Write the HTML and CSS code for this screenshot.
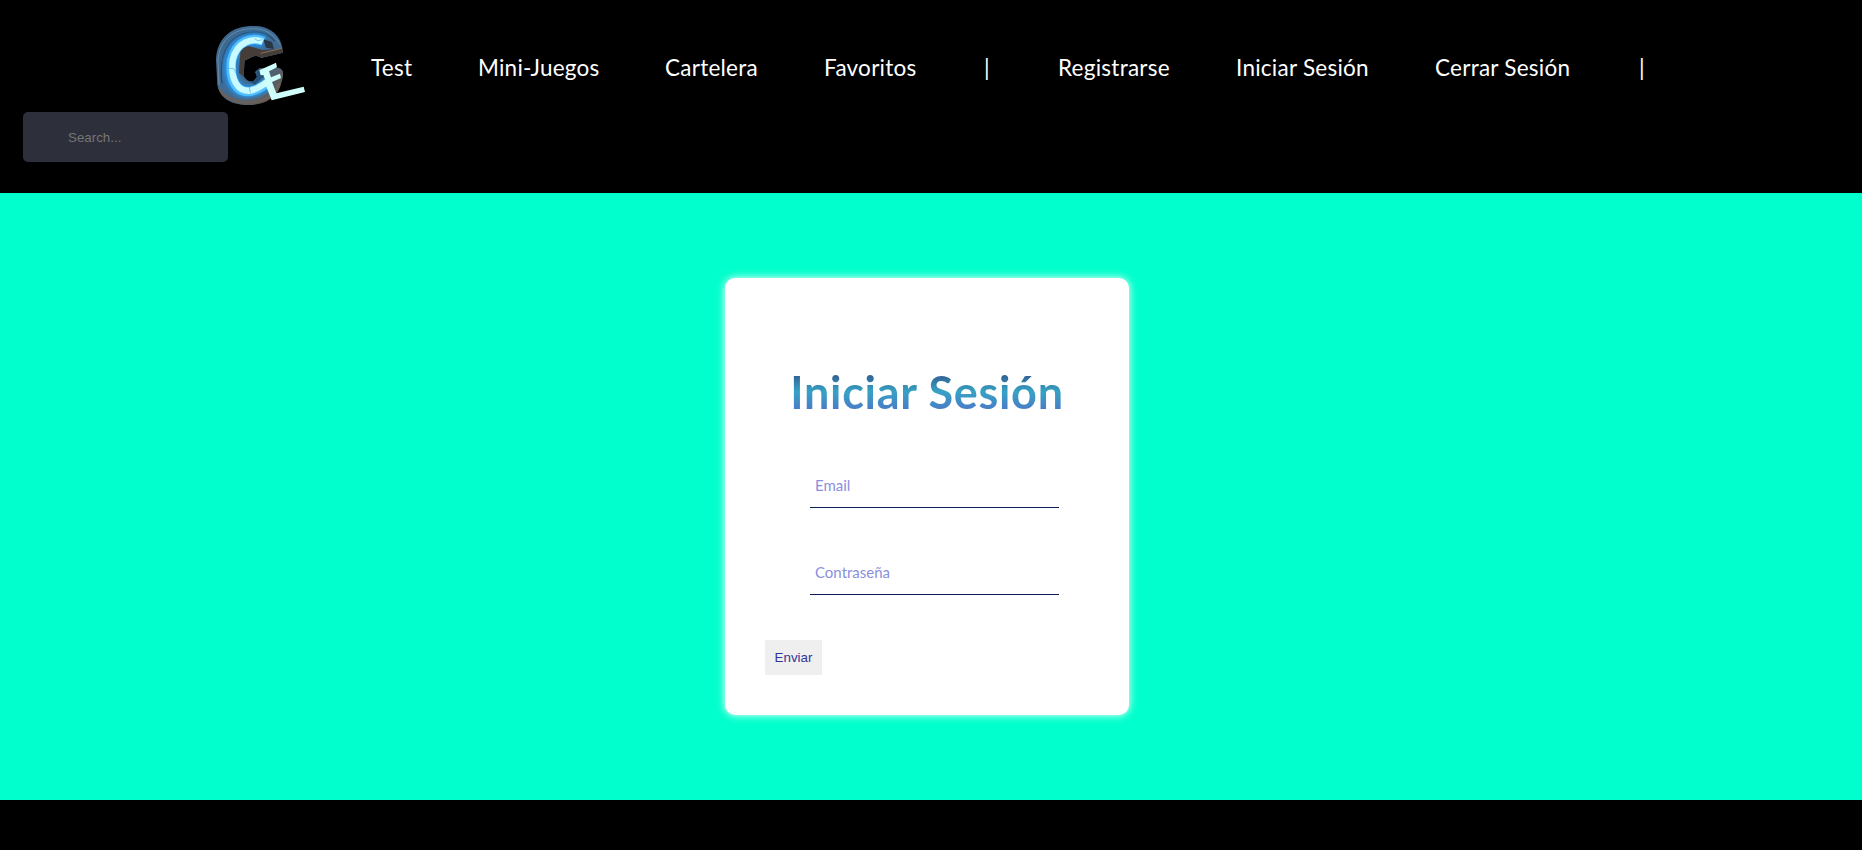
FILE: index.html
```html
<!DOCTYPE html>
<html lang="es">
<head>
<meta charset="utf-8">
<title>Iniciar Sesión</title>
<link rel="stylesheet" href="styles.css">
</head>
<body>
<header class="header">
  <nav class="nav">
    <a class="logo" href="#" aria-label="CE">
      <svg width="120" height="110" viewBox="0 0 360 330">
        <defs>
          <linearGradient id="shell" x1="0" y1="0" x2="1" y2="1">
            <stop offset="0" stop-color="#3d6688"/>
            <stop offset=".45" stop-color="#3d6c98"/>
            <stop offset=".7" stop-color="#615950"/>
            <stop offset="1" stop-color="#463d35"/>
          </linearGradient>
          <filter id="soft" x="-20%" y="-20%" width="140%" height="140%"><feGaussianBlur stdDeviation="7"/></filter>
          <filter id="edge" x="-20%" y="-20%" width="140%" height="140%"><feGaussianBlur stdDeviation="2"/></filter>
          <clipPath id="body"><path d="M148 48C198 44 246 68 249 128L184 144C174 138 166 137 158 140L134 152L131 198C138 211 150 217 160 214L171 200L165 186L178 175L236 173C256 181 252 194 240 232C225 270 185 286 142 285C98 284 62 270 52 225L48 150C50 90 88 52 148 48Z"/></clipPath>
        </defs>
        <g clip-path="url(#body)">
          <rect width="360" height="330" fill="url(#shell)"/>
          <path d="M54 232C74 270 112 279 153 276C198 274 226 254 239 220" fill="none" stroke="#6d6056" stroke-width="8"/>
          <path d="M57 225L54 150C58 94 98 56 157 56C195 54 224 74 240 104" fill="none" stroke="#6a8ba4" stroke-width="3"/>
          <path d="M66 220C55 124 90 70 160 66C188 65 210 75 224 94" fill="none" stroke="#2c4c6e" stroke-width="4"/>
          <path d="M192 96C160 79 105 92 92 154C86 216 112 250 152 244C175 241 190 231 207 218" fill="none" stroke="#2494f0" stroke-width="38" filter="url(#soft)"/>
          <path d="M122 116L146 108L186 120L249 116L249 132L183 143L160 139L134 152L131 202L117 188Z" fill="#453d37"/>
          <path d="M124 190L138 210L165 224L196 195L174 178L164 205L145 202Z" fill="#245079"/>
          <path d="M190 88L216 96L222 117L198 113Z" fill="#283645"/>
          <path d="M182 130L245 115" stroke="#7f7468" stroke-width="3"/>
        </g>
        <path d="M190 94C158 80 109 90 95 151C87 211 111 251 151 244C172 241 187 231 203 218" fill="none" stroke="#51bfff" stroke-width="28" filter="url(#edge)"/>
        <path d="M188 95C157 83 111 94 98 150C91 207 112 246 151 242C170 239 184 229 200 217" fill="none" stroke="#c8faff" stroke-width="19" filter="url(#edge)"/>
        <path d="M82 174L101 176L109 191M163 85L173 92L188 89M148 231L151 248" fill="none" stroke="#4aaede" stroke-width="2"/>
        <path d="M178 181L228 158L231 172L207 184L213 202L240 191L243 204L216 216L229 250L311 230L315 246L215 271L199 230L188 229L188 216L196 211L190 195L182 196Z" fill="#cffffb"/>
      </svg>
    </a>
    <ul class="menu">
      <li><a href="#">Test</a></li>
      <li><a href="#">Mini-Juegos</a></li>
      <li><a href="#">Cartelera</a></li>
      <li><a href="#">Favoritos</a></li>
      <li><a href="#">|</a></li>
      <li><a href="#">Registrarse</a></li>
      <li><a href="#">Iniciar Sesión</a></li>
      <li><a href="#">Cerrar Sesión</a></li>
      <li><a href="#">|</a></li>
    </ul>
  </nav>
  <input class="search" type="text" placeholder="Search...">
</header>
<main class="main">
  <form class="card">
    <h1 class="title">Iniciar Sesión</h1>
    <input class="field" type="text" placeholder="Email">
    <input class="field" type="password" placeholder="Contraseña">
    <button class="send" type="button">Enviar</button>
  </form>
</main>
</body>
</html>
```
FILE: styles.css
```css
* { box-sizing: border-box; }
body { margin: 0; background: #000; font-family: Lato, "Open Sans", sans-serif; }
.header { height: 193px; padding-top: 10px; background: #000; }
.nav { display: flex; height: 102px; padding-left: 200px; }
.logo { width: 120px; height: 102px; flex: none; }
.logo svg { display: block; }
.menu {
  display: grid;
  grid-template-columns: 107px 187px 159px 160px 74px 178px 199px 204px 20px;
  margin: 0 0 0 51px; padding: 45px 0 0; list-style: none;
}
.menu a { color: #fff; font-size: 22.5px; line-height: 26px; letter-spacing: .25px; text-decoration: none; white-space: nowrap; }
.search {
  display: block; width: 205px; height: 50px; margin-left: 23px; padding: 0 20px 0 45px;
  border: 0; border-radius: 5px; background: #2d303a; color: #fff;
  font: 13.333px "Liberation Sans", Arial, sans-serif;
}
.search::placeholder { color: #757575; }
.main { height: 607px; padding-top: 85px; background: #00ffcc; }
.card {
  display: flex; flex-direction: column; align-items: flex-start;
  width: 404px; height: 437px; margin-left: 725px; padding: 84px 40px 40px;
  border-radius: 10px; background: #fff; box-shadow: 0 0 8px #fff;
}
.title {
  align-self: center; margin: 0; font-size: 45px; line-height: 61px; font-weight: 700; letter-spacing: .7px; white-space: nowrap;
  background: linear-gradient(#30578e 18%, #37a3c4 48%, #4e73c8 85%);
  -webkit-background-clip: text; background-clip: text; color: transparent;
}
.field {
  width: 249px; height: 42px; margin: 43px 0 0 45px; padding: 0 5px 3px; border: 0;
  border-bottom: 1px solid #0c1c54; background: transparent;
  font: 15px Lato, "Open Sans", sans-serif;
}
.field + .field { margin-top: 45px; }
.field::placeholder { color: #8a90dc; }
.send {
  width: 57px; height: 35px; margin-top: 45px; padding: 0; border: 0; background: #efefef;
  color: #30369a; font: 13.333px "Liberation Sans", Arial, sans-serif;
}
```
